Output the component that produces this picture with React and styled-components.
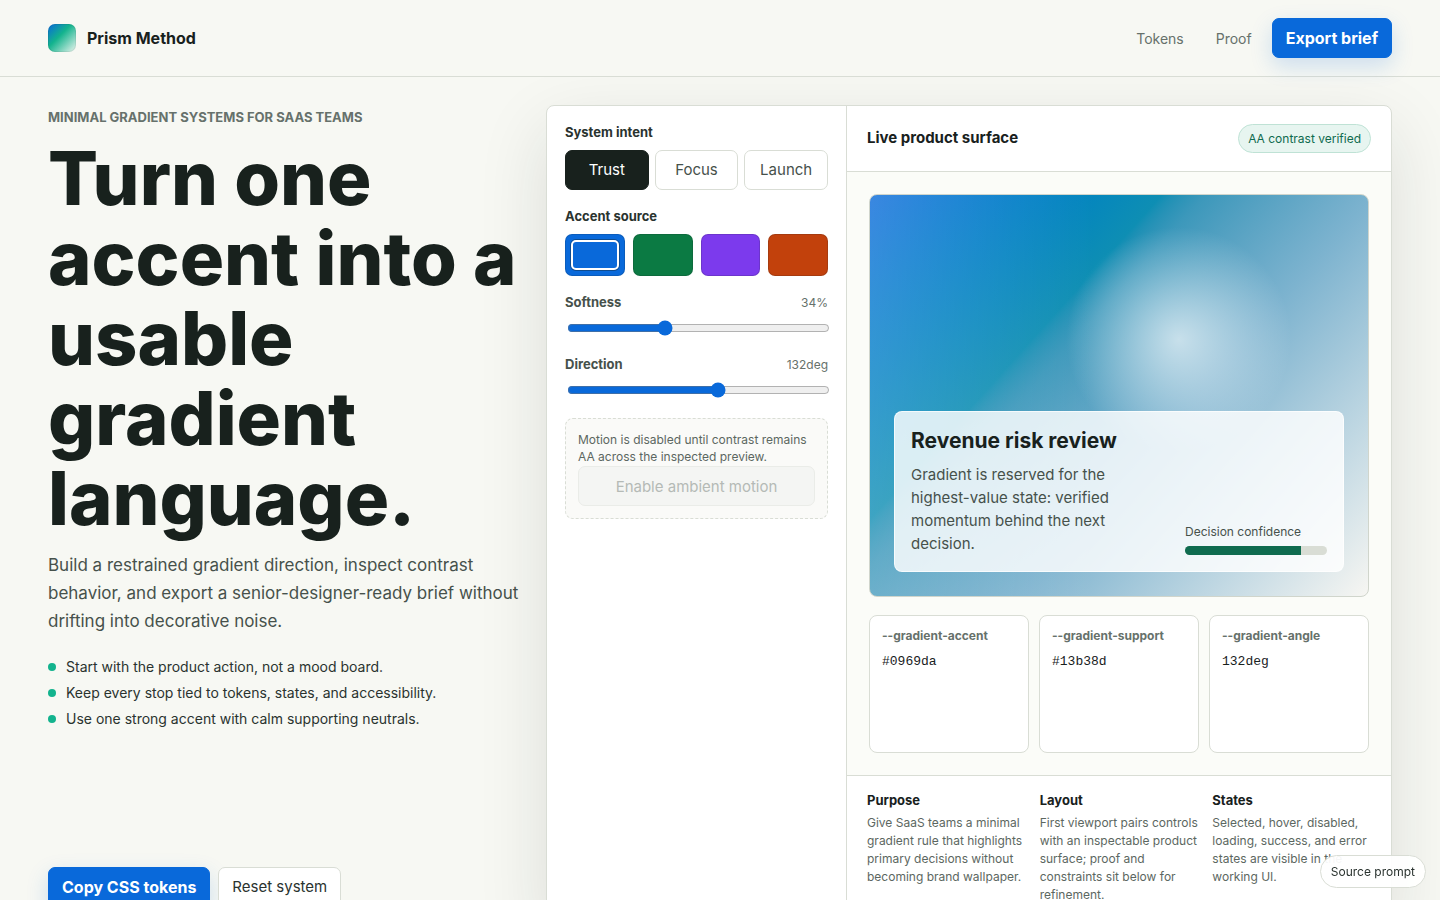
import React, { useState } from 'react';
import styled, { createGlobalStyle } from 'styled-components';

const GlobalStyle = createGlobalStyle`
  *, *::before {
    box-sizing: border-box;
  }

  body {
    margin: 0;
    color: #18211d;
    background: #f7f8f3;
    font-family: Inter, "Liberation Sans", sans-serif;
    line-height: 1.5;
  }

  button, input {
    font: inherit;
  }
`

const intents = ['Trust', 'Focus', 'Launch'];

const accents = [
    { name: 'Blue', color: '#0969da' },
    { name: 'Green', color: '#0b7a43' },
    { name: 'Violet', color: '#7c3aed' },
    { name: 'Orange', color: '#c2410c' },
];

const principles = [
    'Start with the product action, not a mood board.',
    'Keep every stop tied to tokens, states, and accessibility.',
    'Use one strong accent with calm supporting neutrals.',
];

const notes = [
    { title: 'Purpose', text: 'Give SaaS teams a minimal gradient rule that highlights primary decisions without becoming brand wallpaper.' },
    { title: 'Layout', text: 'First viewport pairs controls with an inspectable product surface; proof and constraints sit below for refinement.' },
    { title: 'States', text: 'Selected, hover, disabled, loading, success, and error states are visible in the working UI.' },
];

export default function App() {
    const [intent, setIntent] = useState('Trust');
    const [accent, setAccent] = useState('#0969da');
    const [softness, setSoftness] = useState(34);
    const [angle, setAngle] = useState(132);

    const reset = () => {
        setIntent('Trust');
        setAccent('#0969da');
        setSoftness(34);
        setAngle(132);
    }

    const tokens = [
        { name: '--gradient-accent', value: accent },
        { name: '--gradient-support', value: '#13b38d' },
        { name: '--gradient-angle', value: `${angle}deg` },
    ];

    return (
        <React.Fragment>
            <GlobalStyle />
            <Topbar>
                <Brand href="#top">
                    <BrandMark />
                    Prism Method
                </Brand>
                <Nav>
                    <NavLink href="#tokens">Tokens</NavLink>
                    <NavLink href="#proof">Proof</NavLink>
                    <PrimaryButton type="button">Export brief</PrimaryButton>
                </Nav>
            </Topbar>
            <Main id="top">
                <Intro>
                    <div>
                        <Eyebrow>Minimal gradient systems for SaaS teams</Eyebrow>
                        <Headline>Turn one accent into a usable gradient language.</Headline>
                        <Lede>
                            Build a restrained gradient direction, inspect contrast behavior, and export a
                            senior-designer-ready brief without drifting into decorative noise.
                        </Lede>
                        <Principles>
                            {principles.map(item => <Principle key={item}>{item}</Principle>)}
                        </Principles>
                    </div>
                    <Actions>
                        <PrimaryButton type="button">Copy CSS tokens</PrimaryButton>
                        <Button type="button" onClick={reset}>Reset system</Button>
                    </Actions>
                </Intro>
                <Workbench>
                    <Controls>
                        <Group>
                            <Legend>System intent</Legend>
                            <Segments>
                                {intents.map(name => (
                                    <Segment
                                        key={name}
                                        type="button"
                                        $active={name === intent}
                                        aria-pressed={name === intent}
                                        onClick={() => setIntent(name)}
                                    >
                                        {name}
                                    </Segment>
                                ))}
                            </Segments>
                        </Group>
                        <Group>
                            <Legend>Accent source</Legend>
                            <Swatches>
                                {accents.map(({ name, color }) => (
                                    <Swatch
                                        key={name}
                                        type="button"
                                        aria-label={name}
                                        aria-pressed={color === accent}
                                        $color={color}
                                        $active={color === accent}
                                        onClick={() => setAccent(color)}
                                    />
                                ))}
                            </Swatches>
                        </Group>
                        <Field>
                            <FieldRow>
                                <label htmlFor="softness">Softness</label>
                                <output htmlFor="softness">{softness}%</output>
                            </FieldRow>
                            <Range
                                id="softness"
                                type="range"
                                min="18"
                                max="62"
                                value={softness}
                                onChange={e => setSoftness(Number(e.target.value))}
                            />
                        </Field>
                        <Field>
                            <FieldRow>
                                <label htmlFor="direction">Direction</label>
                                <output htmlFor="direction">{angle}deg</output>
                            </FieldRow>
                            <Range
                                id="direction"
                                type="range"
                                min="45"
                                max="195"
                                value={angle}
                                onChange={e => setAngle(Number(e.target.value))}
                            />
                        </Field>
                        <MotionNote>
                            Motion is disabled until contrast remains AA across the inspected preview.
                            <MotionButton type="button" disabled>Enable ambient motion</MotionButton>
                        </MotionNote>
                    </Controls>
                    <Surface>
                        <SurfaceHeader>
                            <SurfaceTitle>Live product surface</SurfaceTitle>
                            <Status>AA contrast verified</Status>
                        </SurfaceHeader>
                        <Stage>
                            <Preview $accent={accent} $angle={angle} $softness={softness}>
                                <ReviewCard>
                                    <div>
                                        <ReviewTitle>Revenue risk review</ReviewTitle>
                                        <ReviewText>
                                            Gradient is reserved for the highest-value state: verified momentum behind
                                            the next decision.
                                        </ReviewText>
                                    </div>
                                    <Confidence>
                                        Decision confidence
                                        <Meter><MeterFill style={{ width: '82%' }} /></Meter>
                                    </Confidence>
                                </ReviewCard>
                            </Preview>
                            <Tokens id="tokens">
                                {tokens.map(token => (
                                    <Token key={token.name}>
                                        <TokenName>{token.name}</TokenName>
                                        <TokenValue>{token.value}</TokenValue>
                                    </Token>
                                ))}
                            </Tokens>
                        </Stage>
                        <Notes id="proof">
                            {notes.map(note => (
                                <div key={note.title}>
                                    <NoteTitle>{note.title}</NoteTitle>
                                    <NoteText>{note.text}</NoteText>
                                </div>
                            ))}
                        </Notes>
                    </Surface>
                </Workbench>
            </Main>
            <SourceButton type="button">Source prompt</SourceButton>
        </React.Fragment>
    )
}

const Topbar = styled.header`
    position: sticky;
    top: 0;
    z-index: 5;
    display: flex;
    align-items: center;
    justify-content: space-between;
    padding: 18px 48px;
    background: #f7f8f3;
    border-bottom: 1px solid #d9ddd5;
`

const Brand = styled.a`
    display: inline-flex;
    align-items: center;
    gap: 11px;
    color: inherit;
    font-weight: 700;
    text-decoration: none;
`

const BrandMark = styled.span`
    width: 28px;
    height: 28px;
    border-radius: 7px;
    background: linear-gradient(135deg, #0969da, #13b38d 42%, #edf5ef);
    box-shadow: inset 0 0 0 1px rgba(24, 33, 29, 0.08);
`

const Nav = styled.nav`
    display: flex;
    align-items: center;
    gap: 8px;
`

const NavLink = styled.a`
    padding: 8px 12px;
    color: #66716b;
    font-size: 14px;
    text-decoration: none;
`

const Button = styled.button`
    min-height: 40px;
    padding: 0 13px;
    border: 1px solid #d9ddd5;
    border-radius: 7px;
    color: #2a332f;
    background: #fff;
    font-size: 15px;
    cursor: pointer;
`

const PrimaryButton = styled(Button)`
    border-color: #0969da;
    color: #fff;
    background: #0969da;
    font-size: 16px;
    font-weight: 700;
    box-shadow: 0 8px 22px rgba(9, 105, 218, 0.18);
`

const Main = styled.main`
    display: grid;
    grid-template-columns: minmax(0, 5fr) minmax(0, 9fr);
    gap: 28px;
    padding: 28px 48px;
`

const Intro = styled.section`
    display: flex;
    flex-direction: column;
    justify-content: space-between;
    padding: 4px 0 14px;
`

const Eyebrow = styled.p`
    margin: 0 0 12px;
    color: #66716b;
    font-size: 13px;
    font-weight: 700;
    line-height: 17px;
    text-transform: uppercase;
`

const Headline = styled.h1`
    margin: 0 0 13px;
    font-size: 74px;
    font-weight: 800;
    line-height: 80px;
`

const Lede = styled.p`
    margin: 0 -8px 0 0;
    color: #46514b;
    font-size: 17px;
    line-height: 28px;
`

const Principles = styled.ul`
    display: grid;
    gap: 6px;
    margin: 22px 0 0;
    padding: 0;
    list-style: none;
`

const Principle = styled.li`
    display: flex;
    align-items: center;
    gap: 10px;
    color: #2a332f;
    font-size: 14px;
    line-height: 20px;

    &::before {
        content: "";
        width: 8px;
        height: 8px;
        border-radius: 50%;
        background: #13b38d;
    }
`

const Actions = styled.div`
    display: flex;
    gap: 8px;
`

const Workbench = styled.section`
    display: grid;
    grid-template-columns: 300px minmax(0, 1fr);
    overflow: hidden;
    border: 1px solid #d9ddd5;
    border-radius: 8px;
    background: #fff;
    box-shadow: 0 24px 70px rgba(24, 33, 29, 0.12);
`

const Controls = styled.div`
    padding: 18px;
    border-right: 1px solid #d9ddd5;
`

const Group = styled.div`
    margin-bottom: 18px;
`

const Legend = styled.h2`
    margin: 0 0 9px;
    color: #2a332f;
    font-size: 13px;
    font-weight: 700;
    line-height: 17px;
`

const Segments = styled.div`
    display: grid;
    grid-template-columns: repeat(3, 1fr);
    gap: 6px;
`

const Segment = styled(Button)`
    padding: 0;
    color: ${props => props.$active ? '#fff' : '#46514b'};
    background: ${props => props.$active ? '#18211d' : '#fff'};
    border-color: ${props => props.$active ? '#18211d' : '#d9ddd5'};
`

const Swatches = styled.div`
    display: grid;
    grid-template-columns: repeat(4, 1fr);
    gap: 8px;
`

const Swatch = styled.button`
    height: 42px;
    padding: 5px;
    border: 1px solid rgba(24, 33, 29, 0.16);
    border-radius: 7px;
    background: ${props => props.$color};
    cursor: pointer;

    &::before {
        content: "";
        display: ${props => props.$active ? 'block' : 'none'};
        height: 30px;
        border: 2px solid #fff;
        border-radius: 5px;
        box-shadow: 0 0 0 1px rgba(24, 33, 29, 0.4);
    }
`

const Field = styled.div`
    margin-bottom: 20px;
`

const FieldRow = styled.div`
    display: flex;
    align-items: center;
    justify-content: space-between;
    margin-bottom: 9px;
    line-height: 17px;

    label {
        color: #46514b;
        font-size: 13px;
        font-weight: 700;
    }

    output {
        color: #66716b;
        font-size: 12px;
    }
`

const Range = styled.input`
    display: block;
    width: 100%;
    height: 16px;
    accent-color: #0969da;
`

const MotionNote = styled.div`
    padding: 12px;
    border: 1px dashed #d9ddd5;
    border-radius: 8px;
    color: #5c6761;
    background: #fafaf8;
    font-size: 12px;
    line-height: 17px;
`

const MotionButton = styled(Button)`
    display: block;
    width: 100%;
    margin-top: 1px;
    color: #b5bab6;
    background: #f4f5f3;
    border-color: #eaece8;
    cursor: not-allowed;
`

const Surface = styled.div`
    display: flex;
    flex-direction: column;
`

const SurfaceHeader = styled.div`
    display: flex;
    align-items: center;
    justify-content: space-between;
    padding: 18px 20px;
    border-bottom: 1px solid #d9ddd5;
`

const SurfaceTitle = styled.h2`
    margin: 0;
    font-size: 15px;
    font-weight: 700;
`

const Status = styled.span`
    padding: 5px 9px;
    border: 1px solid #bfe2d5;
    border-radius: 999px;
    color: #0f6b4f;
    background: #e7f5f0;
    font-size: 12px;
    line-height: 17px;
`

const Stage = styled.div`
    display: flex;
    flex: 1;
    flex-direction: column;
    gap: 18px;
    padding: 22px;
    background: #fbfcf8;
`

const Preview = styled.div`
    display: flex;
    align-items: flex-end;
    min-height: 403px;
    padding: 24px;
    border: 1px solid #d0d5cc;
    border-radius: 8px;
    background:
        radial-gradient(circle at 62% 36%, rgba(255, 255, 255, 0.64), transparent 28%),
        linear-gradient(90deg, rgba(255, 255, 255, 0.2), transparent 45%),
        linear-gradient(
            ${props => props.$angle}deg,
            ${props => props.$accent},
            color-mix(in srgb, ${props => props.$accent}, #13b38d) ${props => props.$softness}%,
            #3c98bb ${props => props.$softness + 5}%,
            #7db3cf 59%,
            #f7f6f2
        );
`

const ReviewCard = styled.article`
    display: grid;
    grid-template-columns: minmax(0, 1fr) 142px;
    align-items: end;
    gap: 64px;
    width: 100%;
    padding: 16px;
    border: 1px solid rgba(255, 255, 255, 0.72);
    border-radius: 8px;
    background: rgba(255, 255, 255, 0.82);
`

const ReviewTitle = styled.h3`
    margin: 0 0 9px;
    font-size: 21px;
    font-weight: 700;
    line-height: 26px;
`

const ReviewText = styled.p`
    margin: 0;
    color: #46514b;
    font-size: 15px;
    line-height: 23px;
`

const Confidence = styled.div`
    display: grid;
    gap: 6px;
    color: #46514b;
    font-size: 12px;
    line-height: 17px;
`

const Meter = styled.div`
    height: 9px;
    overflow: hidden;
    border-radius: 999px;
    background: #d9ddd5;
`

const MeterFill = styled.div`
    height: 100%;
    background: #0f6b4f;
`

const Tokens = styled.div`
    display: grid;
    grid-template-columns: repeat(3, minmax(0, 1fr));
    gap: 10px;
    min-height: 138px;
`

const Token = styled.div`
    padding: 12px;
    border: 1px solid #d9ddd5;
    border-radius: 8px;
    background: #fff;
`

const TokenName = styled.strong`
    display: block;
    margin-bottom: 9px;
    color: #66716b;
    font-size: 12px;
    line-height: 16px;
`

const TokenValue = styled.code`
    display: block;
    font-family: "Liberation Mono", monospace;
    font-size: 13px;
    line-height: 18px;
`

const Notes = styled.div`
    display: grid;
    grid-template-columns: repeat(3, minmax(0, 1fr));
    gap: 14px;
    padding: 16px 20px;
    border-top: 1px solid #d9ddd5;
`

const NoteTitle = styled.h3`
    margin: 0 0 5px;
    font-size: 13px;
    font-weight: 700;
    line-height: 17px;
`

const NoteText = styled.p`
    margin: 0;
    color: #5c6761;
    font-size: 12px;
    line-height: 18px;
`

const SourceButton = styled.button`
    position: fixed;
    right: 14px;
    bottom: 12px;
    z-index: 10;
    padding: 7px 10px;
    border: 1px solid #d9ddd5;
    border-radius: 999px;
    color: #2a332f;
    background: rgba(255, 255, 255, 0.94);
    font-size: 12px;
    line-height: 17px;
    cursor: pointer;
`
